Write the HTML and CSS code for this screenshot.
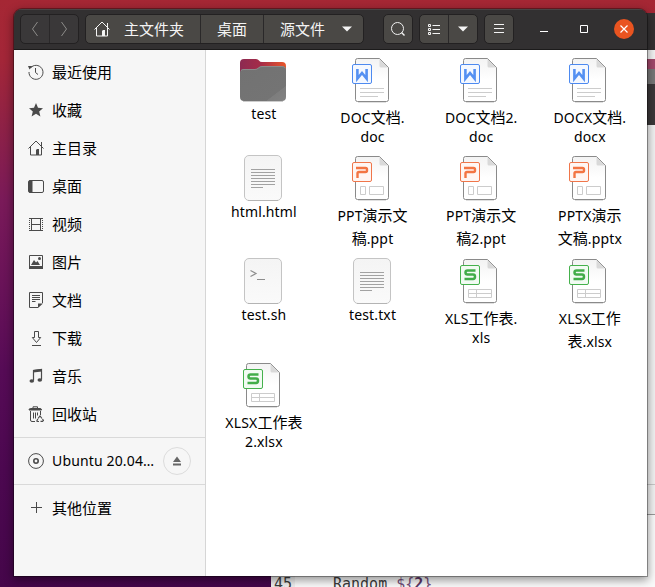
FILE: index.html
```
<!DOCTYPE html>
<html lang="zh-CN">
<head>
<meta charset="utf-8">
<title>源文件</title>
<link rel="stylesheet" href="styles.css">
</head>
<body>
<svg class="defs" width="0" height="0" aria-hidden="true">
  <defs>
    <linearGradient id="pageFill" x1="0" y1="0" x2="0" y2="1"><stop offset="0" stop-color="#f3f3f3"/><stop offset=".5" stop-color="#fff"/></linearGradient>
    <linearGradient id="paperFill" x1="0" y1="0" x2="0" y2="1"><stop offset="0" stop-color="#f4f4f4"/><stop offset="1" stop-color="#fafafa"/></linearGradient>
    <linearGradient id="folderBack" x1="0" y1="0" x2="1" y2="0"><stop offset="0" stop-color="#8c2a52"/><stop offset=".45" stop-color="#a52c48"/><stop offset="1" stop-color="#e9562a"/></linearGradient>
    <linearGradient id="folderFront" x1="0" y1="0" x2="1" y2="1"><stop offset="0" stop-color="#727272"/><stop offset=".78" stop-color="#747474"/><stop offset=".79" stop-color="#7d7d7d"/><stop offset="1" stop-color="#828282"/></linearGradient>
  </defs>
  <symbol id="home" viewBox="0 0 16 16"><path d="M.5 8.500 8 1l7.500 7.500M13.500 2v4M2.500 7v8h11V7" fill="none" stroke="currentColor"/><path d="M8 15v-5l1-1h2v6z" fill="currentColor"/></symbol>
  <symbol id="page" viewBox="0 0 48 48">
    <path d="M10 46.500h28" stroke="#000" stroke-opacity=".12"/>
    <path d="M9.500 2.500H31.500L40.500 11.500V43.500a2 2 0 0 1-2 2H9.500a2 2 0 0 1-2-2V4.500a2 2 0 0 1 2-2z" fill="url(#pageFill)" stroke="#8a8a8a"/>
    <path d="M31.500 3v7a1.500 1.500 0 0 0 1.500 1.500h7z" fill="#d9d9d9"/>
  </symbol>
  <symbol id="word" viewBox="0 0 48 48"><use href="#page"/>
    <path d="M12 32.500h24M12 36.500h24M12 40.500h18" stroke="#ccc"/>
    <rect x="4.500" y="8.500" width="19" height="19" rx="1.500" fill="#f4f8ff" stroke="#4d8af0"/>
    <path d="M9.400 13v9.600L14 17l4.600 5.600V13" fill="none" stroke="#5490f2" stroke-width="2.600"/>
  </symbol>
  <symbol id="slides" viewBox="0 0 48 48"><use href="#page"/>
    <path d="M12.500 32.500h5v8h-5zM21.500 32.500h14v8h-14z" fill="#fff" stroke="#ccc"/>
    <rect x="4.500" y="8.500" width="19" height="19" rx="1.500" fill="#fff6f3" stroke="#f0764a"/>
    <path d="M8 14h9.500q1.500 0 1.500 1.500v1q0 1.500-1.500 1.500H11q-1.500 0-1.500 1.500V24" fill="none" stroke="#f37543" stroke-width="2.400"/>
  </symbol>
  <symbol id="sheet" viewBox="0 0 48 48"><use href="#page"/>
    <path d="M12.500 32.500h23v8h-23zM12.500 36.500h23M20.500 32.500v8" fill="none" stroke="#ccc"/>
    <rect x="4.500" y="8.500" width="19" height="19" rx="1.500" fill="#f2fbf3" stroke="#45b14c"/>
    <path d="M19.500 13.500h-8q-2 0-2 2t2 2h5.500q2 0 2 2.200t-2 2.300H8.500" fill="none" stroke="#42ad49" stroke-width="2.500"/>
  </symbol>
  <symbol id="paper" viewBox="0 0 48 48">
    <rect x="5.500" y="1.500" width="37" height="45" rx="4.500" fill="url(#paperFill)" stroke="#c4c4c4"/><path d="M9 46.500h30" stroke="#b4b4b4"/>
  </symbol>
  <symbol id="text" viewBox="0 0 48 48"><use href="#paper"/>
    <path d="M12 15.500h24M12 18.500h24M12 21.500h24M12 24.500h24M12 27.500h24M12 30.500h24M12 33.500h12" stroke="#a2a2a2"/>
  </symbol>
  <symbol id="script" viewBox="0 0 48 48"><use href="#paper"/>
    <path d="M11.500 13.500 17 16.500l-5.500 3M18 22.500h8" fill="none" stroke="#8d8d8d" stroke-width="1.200"/>
  </symbol>
  <symbol id="folder" viewBox="0 0 48 48">
    <path d="M4 45.500h40" stroke="#000" stroke-opacity=".2"/>
    <path d="M1 7q0-4 4-4h12q2 0 3 1.500T23 6h20q4 0 4 4v20H1z" fill="url(#folderBack)"/>
    <path d="M1 17q0-4 4-4h11q2 0 3.500-1.500T23 10h20q4 0 4 4v27q0 4-4 4H5q-4 0-4-4z" fill="url(#folderFront)"/>
    <path d="M2 14.500q1-1 3-1h11q2 0 3.500-1.500T23 10.500h20q2 0 3.500 1.500" fill="none" stroke="#929292" stroke-width=".8"/>
  </symbol>
</svg>

<div class="desktop">
  <div class="backdrop">
    <div class="terminal"><i class="bar"></i><i class="gap"></i><i class="pink"></i><i class="tabs"></i><i class="dark"></i><i class="body"></i><i class="foot"></i></div>
    <div class="editor"><span class="num">45</span><span class="code">Random <b>$</b><b>{</b><strong>2</strong><b>}</b></span></div>
  </div>

  <main class="window">
    <header class="titlebar">
      <div class="group nav">
        <button><svg width="16" height="16"><path d="M10.500 1 5.500 8l5 7" fill="none" stroke="#8c8b89"/></svg></button>
        <button><svg width="16" height="16"><path d="M5.500 1l5 7-5 7" fill="none" stroke="#8c8b89"/></svg></button>
      </div>
      <div class="group path">
        <button class="p1"><svg width="16" height="16"><use href="#home"/></svg><span>主文件夹</span></button>
        <button class="p2">桌面</button>
        <button class="p3"><span>源文件</span><svg width="10" height="6"><path d="M0 .5h10L5 5.500z" fill="#f4f4f4"/></svg></button>
      </div>
      <div class="group search"><button><svg width="16" height="16"><circle cx="7.500" cy="7.500" r="6" fill="none" stroke="#f2f2f2"/><path d="M11.500 11.500l3 3" stroke="#f2f2f2" stroke-width="1.400"/></svg></button></div>
      <div class="group view">
        <button><svg width="14" height="13"><path d="M1.500 1.500h2v2h-2zM1.500 5.500h2v2h-2zM1.500 9.500h2v2h-2zM5.500 2.500H13M5.500 6.500H13M5.500 10.500H13" fill="none" stroke="#f4f4f4"/></svg></button>
        <button><svg width="10" height="6"><path d="M0 .5h10L5 5.500z" fill="#f4f4f4"/></svg></button>
      </div>
      <div class="group menu"><button><svg width="10" height="10"><path d="M0 .5h10M0 4.500h10M0 8.500h10" stroke="#f4f4f4"/></svg></button></div>
      <div class="controls">
        <svg width="8" height="10"><path d="M0 7.500h8" stroke="#fff"/></svg>
        <svg width="8" height="8"><path d="M.5.5h7v7h-7z" fill="none" stroke="#fff"/></svg>
        <svg width="20" height="20"><circle cx="10" cy="10" r="10" fill="#e95420"/><path d="M6.500 6.500l7 7M13.500 6.500l-7 7" stroke="#fff" stroke-width="1.200"/></svg>
      </div>
    </header>

    <div class="content">
      <nav class="sidebar">
        <ul>
          <li><svg width="16" height="16" fill="none" stroke="currentColor"><path d="M2.500 4A7 7 0 1 1 1 8M7.500 4v4.500l2.500 2"/><path d="M0 2h4.500l-3 3.500z" fill="currentColor" stroke="none"/></svg>最近使用</li>
          <li><svg width="16" height="16"><path d="M8 1l2 4.800 5 .4-3.800 3.300 1.200 5L8 11.800 3.600 14.500l1.200-5L1 6.200l5-.4z" fill="currentColor"/></svg>收藏</li>
          <li><svg width="16" height="16"><use href="#home"/></svg>主目录</li>
          <li><svg width="16" height="16"><rect x=".5" y="2.500" width="15" height="12" rx="1.500" fill="none" stroke="currentColor"/><path d="M1 2.500h3.500v12H1z" fill="currentColor"/></svg>桌面</li>
          <li><svg width="16" height="16" fill="none" stroke="currentColor"><path d="M3.500 2v13M12.500 2v13M3.500 2.500h9M3.500 8.500h9M3.500 14.500h9"/><path d="M1.500 2v13M14.500 2v13" stroke-dasharray="1 1"/><path d="M1 2.500h3M12 2.500h3M1 14.500h3M12 14.500h3"/></svg>视频</li>
          <li><svg width="16" height="16"><path d="M1.500 1.500h13v13h-13z" fill="none" stroke="currentColor"/><path d="M1 12h14v3H1zM3 11l3-5 2 2.500L9.500 7l2.500 4z" fill="currentColor"/><circle cx="11.500" cy="4.500" r="1.500" fill="currentColor"/></svg>图片</li>
          <li><svg width="16" height="16"><path d="M10 15.500H1.500V.5h13V11M4 3.500h8M4 5.500h8M4 7.500h8M4 9.500h3.500" fill="none" stroke="currentColor"/><path d="M10 16v-4.500h5z" fill="currentColor"/></svg>文档</li>
          <li><svg width="16" height="16"><path d="M6.500 1.500h4v6h2.200L8.500 12.500 4.300 7.500h2.200zM4 15.500h9" fill="none" stroke="currentColor"/></svg>下载</li>
          <li><svg width="16" height="16"><path d="M5.500 12.500V2.500l8-1v10" fill="none" stroke="currentColor" stroke-width="1.200"/><path d="M5 2l9-1v2.500l-9 1z" fill="currentColor"/><ellipse cx="3.800" cy="13" rx="2.300" ry="1.800" fill="currentColor"/><ellipse cx="11.800" cy="12" rx="2.300" ry="1.800" fill="currentColor"/></svg>音乐</li>
          <li><svg width="16" height="16" fill="none" stroke="currentColor"><path d="M1 4q0-1.500 1.500-1.500h9.500q1.500 0 1.500 1.500z" fill="currentColor"/><path d="M5 2.500V.8h4.500v1.700M2.500 5v9q0 1.500 1.500 1.500h3M12.500 5v4M5.500 6.500v6M7.500 6.500v6M9.500 6.500v3"/><path d="M10 12.500l2-2.500 2 2.500M9.800 13l-1 2 1 .5h1.200M12.500 15.300h2l1-.8-1-1.500" stroke-width="1.200"/></svg>回收站</li>
        </ul>
        <div class="drive"><svg width="16" height="16" fill="none" stroke="currentColor"><circle cx="8" cy="8" r="7.400"/><circle cx="8" cy="8" r="2.200" stroke-width="1.600"/></svg><span class="latin">Ubuntu 20.04…</span><button class="eject"><svg width="8" height="10"><path d="M4 .5 8 6H0zM0 7.500h8v2H0z" fill="#666"/></svg></button></div>
        <div class="other"><svg width="16" height="16"><path d="M3 8.500h11M8.500 3v11" stroke="currentColor"/></svg>其他位置</div>
      </nav>

      <section class="files">
        <figure><svg width="48" height="48"><use href="#folder"/></svg><figcaption><p class="latin">test</p></figcaption></figure>
        <figure><svg width="48" height="48"><use href="#word"/></svg><figcaption><p><span class="latin">DOC</span>文档<span class="latin">.</span></p><p class="latin">doc</p></figcaption></figure>
        <figure><svg width="48" height="48"><use href="#word"/></svg><figcaption><p><span class="latin">DOC</span>文档<span class="latin">2.</span></p><p class="latin">doc</p></figcaption></figure>
        <figure><svg width="48" height="48"><use href="#word"/></svg><figcaption><p><span class="latin">DOCX</span>文档<span class="latin">.</span></p><p class="latin">docx</p></figcaption></figure>
        <figure><svg width="48" height="48"><use href="#text"/></svg><figcaption><p class="latin">html.html</p></figcaption></figure>
        <figure><svg width="48" height="48"><use href="#slides"/></svg><figcaption><p><span class="latin">PPT</span>演示文</p><p>稿<span class="latin">.ppt</span></p></figcaption></figure>
        <figure><svg width="48" height="48"><use href="#slides"/></svg><figcaption><p><span class="latin">PPT</span>演示文</p><p>稿<span class="latin">2.ppt</span></p></figcaption></figure>
        <figure><svg width="48" height="48"><use href="#slides"/></svg><figcaption><p><span class="latin">PPTX</span>演示</p><p>文稿<span class="latin">.pptx</span></p></figcaption></figure>
        <figure><svg width="48" height="48"><use href="#script"/></svg><figcaption><p class="latin">test.sh</p></figcaption></figure>
        <figure><svg width="48" height="48"><use href="#text"/></svg><figcaption><p class="latin">test.txt</p></figcaption></figure>
        <figure><svg width="48" height="48"><use href="#sheet"/></svg><figcaption><p><span class="latin">XLS</span>工作表<span class="latin">.</span></p><p class="latin">xls</p></figcaption></figure>
        <figure><svg width="48" height="48"><use href="#sheet"/></svg><figcaption><p><span class="latin">XLSX</span>工作</p><p>表<span class="latin">.xlsx</span></p></figcaption></figure>
        <figure><svg width="48" height="48"><use href="#sheet"/></svg><figcaption><p><span class="latin">XLSX</span>工作表</p><p class="latin">2.xlsx</p></figcaption></figure>
      </section>
    </div>
  </main>
</div>
</body>
</html>
```

FILE: styles.css
```
* { box-sizing: border-box; }
body, ul, p, figure { margin: 0; padding: 0; }
body { width: 655px; height: 587px; overflow: hidden; font: 15px "Noto Sans CJK SC", "Noto Sans", sans-serif; color: #000; }
svg { display: block; flex: none; }
.defs { position: absolute; }
button { border: 0; margin: 0; padding: 0; background: none; color: inherit; font: inherit; display: flex; align-items: center; justify-content: center; }

.desktop { position: relative; width: 655px; height: 587px; padding: 9px 8px 11px 14px; overflow: hidden;
  background: linear-gradient(#a52734 0, #a32638 60px, #8d2147 130px, #7a1a59 200px, #681258 290px, #560b56 370px, #4c0850 470px, #45064a 587px); }

/* windows behind the file manager */
.backdrop { position: absolute; inset: 0; }
.terminal { position: absolute; left: 560px; top: 13px; right: 0; display: flex; flex-direction: column; }
.terminal i { display: block; }
.bar { height: 37px; background: #353233; }
.gap { height: 9px; background: #f4f4f4; }
.pink { height: 10px; background: #a2486a; }
.tabs { height: 15px; background: #777; }
.dark { height: 41px; background: #3b3839; }
.body { height: 359px; background: #f2f2f2; }
.foot { height: 31px; background: #f2f2f2; border-top: 1px solid #c8c8c8; border-bottom: 1px solid #999; }
.editor { position: absolute; left: 271px; right: 0; top: 515px; bottom: 0; background: #fafafa; padding-top: 59px; display: flex; overflow: hidden; font: 15px/20px "DejaVu Sans Mono", monospace; color: #3c3c3c; }
.num { width: 24px; padding-left: 3px; height: 20px; background: #eee; }
.code { padding-left: 38px; white-space: pre; }
.editor b { font-weight: 400; color: #75507b; }
.editor strong { color: #5c3566; }

.window { position: relative; width: 633px; height: 567px; display: flex; flex-direction: column; border-radius: 8px 8px 0 0; overflow: hidden;
  box-shadow: 0 0 0 1px rgba(0,0,0,.33), 0 3px 10px 1px rgba(0,0,0,.42); }
.titlebar { height: 41px; background: #323031; border-bottom: 1px solid #1c1b1b; box-shadow: inset 0 1px #484445; display: flex; align-items: center; padding: 0 13px 0 6px; color: #f4f4f4; }
.group { height: 30px; display: flex; border: 1px solid #232122; border-radius: 5px; background: #4a4845; overflow: hidden; }
.group button + button { border-left: 1px solid #2a2829; }
.nav { width: 59px; background: #3a3839; }
.nav button { flex: 1; }
.path { width: 279px; margin-left: 6px; }
.path button { padding-bottom: 1px; }
.path .p1 { width: 114px; gap: 14px; padding-right: 8px; }
.path .p2 { width: 63px; }
.path .p3 { flex: 1; gap: 17px; padding-left: 5px; }
.search { width: 30px; margin-left: 19px; }
.search button, .menu button { width: 28px; }
.view { width: 59px; margin-left: 6px; }
.view button { flex: 1; }
.menu { width: 30px; margin-left: 6px; }
.controls { margin-left: auto; display: flex; align-items: center; gap: 32px; }
.controls svg:last-child { margin-left: -6px; }

.content { flex: 1; display: flex; background: #fff; }
.sidebar { width: 192px; background: #f6f6f6; border-right: 1px solid #d6d6d6; padding-top: 3px; }
.sidebar ul { list-style: none; }
.sidebar li, .drive, .other { height: 38px; padding-left: 14px; display: flex; align-items: center; gap: 8px; }
.sidebar li { padding-bottom: 2px; }
.sidebar li svg { margin-top: 2px; }
.sidebar svg { color: #4a4a4a; }
.drive { height: 48px; margin-top: 4px; border: solid #d9d9d9; border-width: 1px 0; }
.drive .latin { width: 103px; white-space: nowrap; padding-bottom: 2px; }
.eject { width: 28px; height: 28px; border: 1px solid #dcdcdc; border-radius: 50%; }
.other { margin-top: 3px; }

.files { flex: 1; display: grid; grid-template-columns: repeat(4, 108.67px); grid-template-rows: 98px 103px 104px 104px; align-content: start; padding: 6px 0 0 2.8px; }
.files figure { display: flex; flex-direction: column; align-items: center; }
figcaption { text-align: center; white-space: nowrap; padding: 1px 0 0 1.5px; }
figcaption p { height: 23px; line-height: 23px; }
.latin { font-family: "Noto Sans", sans-serif; font-size: 14px; letter-spacing: .15px; }
p.latin { height: 17px; line-height: 17px; }
```
